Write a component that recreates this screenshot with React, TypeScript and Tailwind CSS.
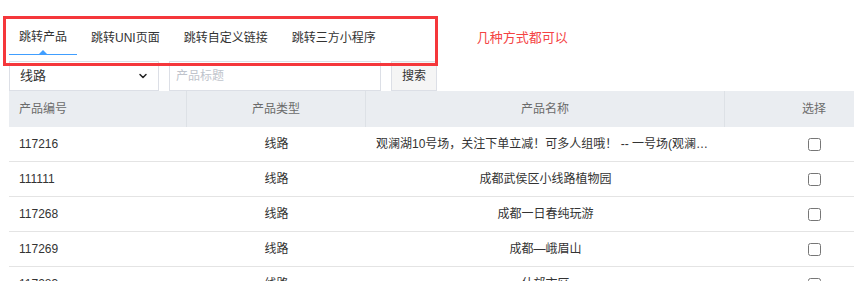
import React from 'react';
import { ChevronDown } from 'lucide-react';

const tabs = ['跳转产品', '跳转UNI页面', '跳转自定义链接', '跳转三方小程序'];

const rows = [
  { id: '117216', type: '线路', name: '观澜湖10号场，关注下单立减！可多人组哦！ -- 一号场(观澜湖高尔夫球会)' },
  { id: '111111', type: '线路', name: '成都武侯区小线路植物园' },
  { id: '117268', type: '线路', name: '成都一日春纯玩游' },
  { id: '117269', type: '线路', name: '成都—峨眉山' },
  { id: '117283', type: '线路', name: '什邡市区' },
];

export default function App() {
  return (
    <div
      className="relative w-[854px] h-[281px] overflow-hidden bg-white text-[#333]"
      style={{ fontFamily: '"Liberation Sans", "Noto Sans CJK SC", sans-serif' }}
    >
      {/* tabs */}
      <div className="flex items-end pt-[20px] pl-[9px] gap-[4px]">
        {tabs.map((t, i) => (
          <div
            key={t}
            className={`relative h-[35px] px-[10px] flex items-center text-[12px] leading-none ${
              i === 0 ? 'border-b border-[#409eff]' : ''
            }`}
          >
            <span>{t}</span>
            {i === 0 && (
              <span className="absolute bottom-0 left-1/2 -translate-x-1/2 w-0 h-0 border-l-[4px] border-r-[4px] border-b-[4px] border-l-transparent border-r-transparent border-b-[#409eff]" />
            )}
          </div>
        ))}
        <div className="ml-[87px] h-[35px] flex items-center text-[13px] text-[#f44343] leading-none">
          <span>几种方式都可以</span>
        </div>
      </div>

      {/* filters */}
      <div className="flex gap-[10px] pl-[9px] mt-[6px] h-[30px]">
        <div className="w-[150px] border border-[#dcdfe6] flex items-center justify-between pl-[10px] pr-[9px] text-[13px]">
          <span>线路</span>
          <ChevronDown className="w-[12px] h-[12px] text-[#222]" strokeWidth={3} />
        </div>
        <div className="w-[212px] border border-[#dcdfe6] flex items-center pl-[6px] text-[12px] text-[#c0c4cc]">
          产品标题
        </div>
        <div className="w-[46px] border border-[#dcdfe6] bg-[#f5f5f5] flex items-center justify-center text-[12px] text-[#333]">
          搜索
        </div>
      </div>

      {/* table */}
      <div className="ml-[9px] w-[894px]">
        <div className="grid grid-cols-[178px_179px_359px_178px] h-[36px] bg-[#eaedf1] text-[12px] text-[#6b6b6b]">
          <div className="flex items-center pl-[10px] border-r border-[#dde1e6]">产品编号</div>
          <div className="flex items-center justify-center border-r border-[#dde1e6]">产品类型</div>
          <div className="flex items-center justify-center border-r border-[#dde1e6]">产品名称</div>
          <div className="flex items-center justify-center">选择</div>
        </div>
        {rows.map((r) => (
          <div
            key={r.id}
            className="grid grid-cols-[178px_179px_359px_178px] h-[35px] border-b border-[#e4e4e4] text-[12px] text-[#333]"
          >
            <div className="flex items-center pl-[10px]">{r.id}</div>
            <div className="flex items-center justify-center">{r.type}</div>
            <div className="flex items-center justify-center px-[10px] min-w-0">
              <span className="truncate">{r.name}</span>
            </div>
            <div className="flex items-center justify-center">
              <input type="checkbox" className="w-[13px] h-[13px] m-0" />
            </div>
          </div>
        ))}
      </div>

      {/* annotation frame */}
      <div className="absolute left-[3px] top-[16px] w-[435px] h-[50px] border-[3px] border-[#f5373b] pointer-events-none" />
    </div>
  );
}
